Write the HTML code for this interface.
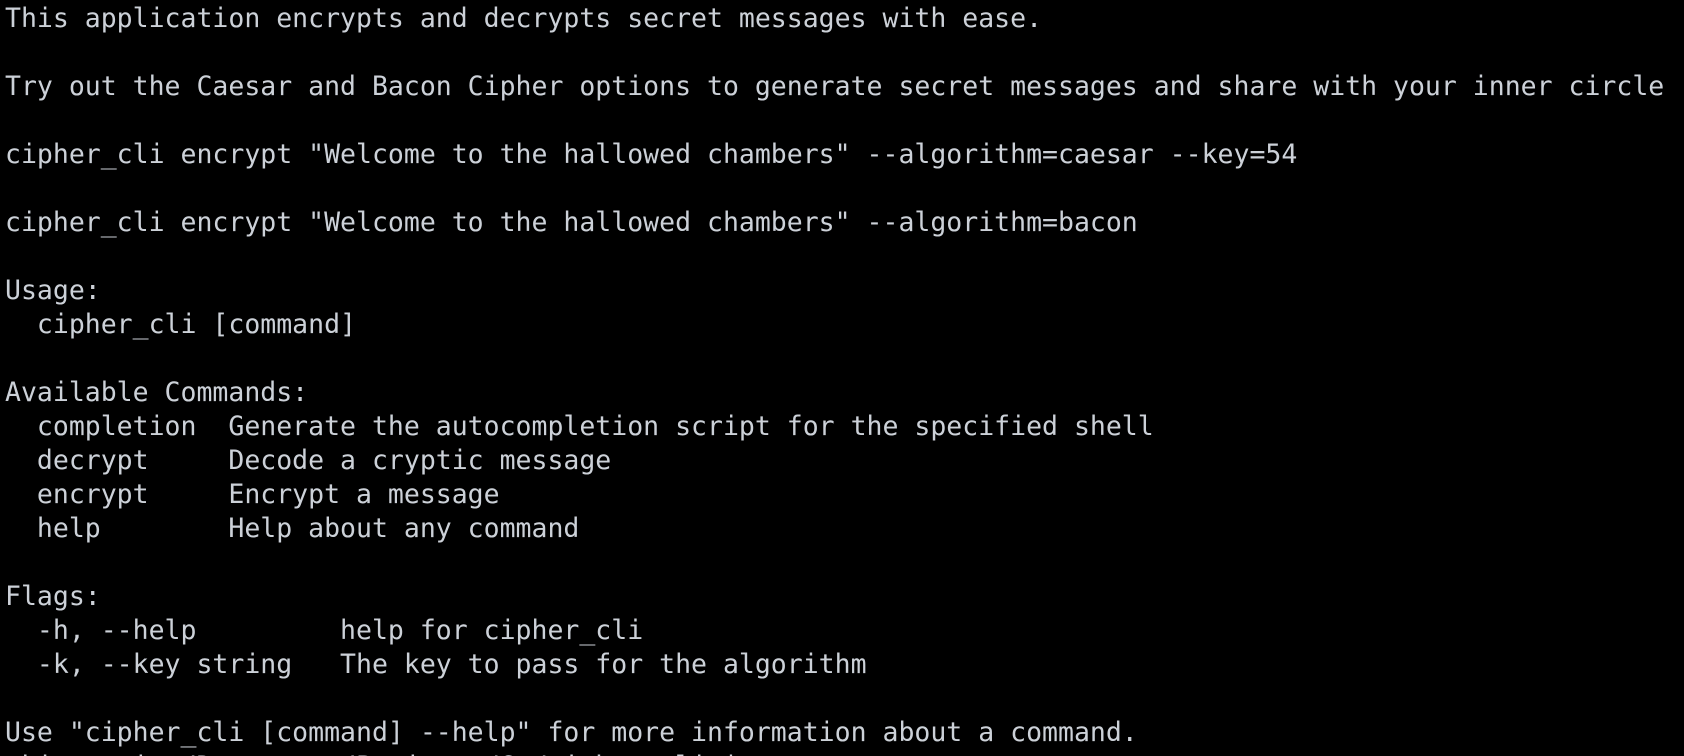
<!DOCTYPE html>
<html><head><meta charset="utf-8"><style>
html,body{margin:0;padding:0;background:#000;width:1684px;height:756px;overflow:hidden}
pre{margin:0;padding:2px 0 0 5px;font-family:"DejaVu Sans Mono","Liberation Mono",monospace;font-size:26.5px;line-height:34px;color:#ccd1d8;letter-spacing:0}
</style></head><body><pre>This application encrypts and decrypts secret messages with ease.

Try out the Caesar and Bacon Cipher options to generate secret messages and share with your inner circle

cipher_cli encrypt "Welcome to the hallowed chambers" --algorithm=caesar --key=54

cipher_cli encrypt "Welcome to the hallowed chambers" --algorithm=bacon

Usage:
  cipher_cli [command]

Available Commands:
  completion  Generate the autocompletion script for the specified shell
  decrypt     Decode a cryptic message
  encrypt     Encrypt a message
  help        Help about any command

Flags:
  -h, --help         help for cipher_cli
  -k, --key string   The key to pass for the algorithm

Use "cipher_cli [command] --help" for more information about a command.
akinsanmi ~/Documents/Projects/Go/cipher_cli |</pre></body></html>
